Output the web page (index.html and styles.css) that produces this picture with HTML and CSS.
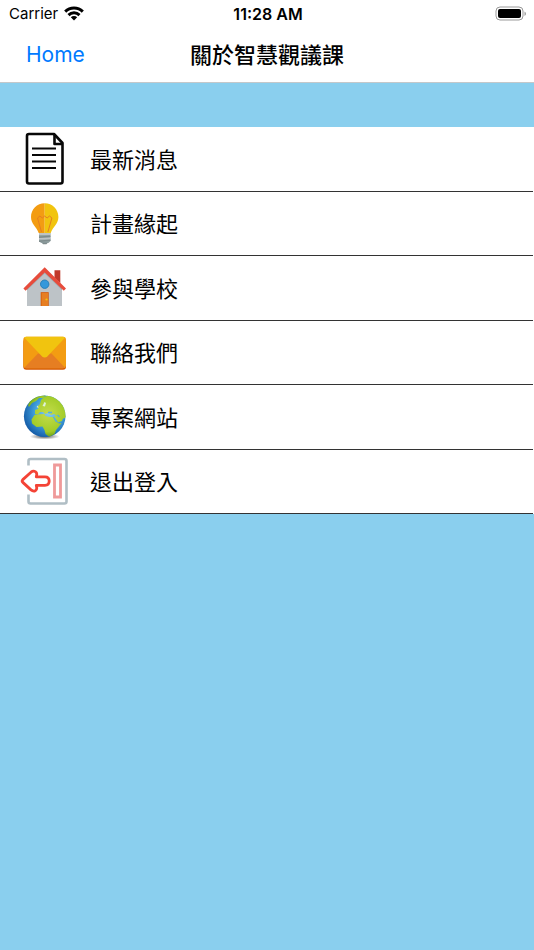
FILE: index.html
```html
<!DOCTYPE html>
<html lang="zh-Hant">
<head>
    <meta charset="UTF-8">
    <meta name="viewport" content="width=device-width, initial-scale=1.0">
    <title>關於智慧觀議課</title>
    <link rel="stylesheet" href="styles.css">
</head>
<body>
    <header class="header">
        <div class="status-bar">
            <div class="carrier">
                <span>Carrier</span>
                <svg width="20" height="15" viewBox="0 0 20 15" fill="none" stroke="#000" stroke-width="3">
                    <path d="M1.2 5.6a12.6 12.6 0 0 1 17.6 0"/>
                    <path d="M4.5 9.1a7.9 7.9 0 0 1 11 0"/>
                    <path d="M10 14.5L6.8 11.3a4.6 4.6 0 0 1 6.4 0z" fill="#000" stroke="none"/>
                </svg>
            </div>
            <div class="time">11:28 AM</div>
            <div class="battery">
                <svg width="32" height="16" viewBox="0 0 32 16">
                    <rect x="1" y="1" width="27" height="13" rx="4" fill="none" stroke="#999"/>
                    <rect x="3" y="3" width="23" height="9" rx="2"/>
                    <path d="M29.5 5.5v4.5q1.5-.6 1.5-2.2t-1.5-2.3z" fill="#999"/>
                </svg>
            </div>
        </div>
        <nav class="nav-bar">
            <a class="home" href="#">Home</a>
            <h1>關於智慧觀議課</h1>
        </nav>
    </header>

    <main class="content">
        <ul class="menu">
            <li>
                <a href="#">
                    <svg class="icon" viewBox="0 0 50 60" fill="none" stroke="#080808" stroke-width="2.6" stroke-linejoin="round">
                        <path d="M9 5h25l8.500 9v38.500q0 2-2 2H9q-2 0-2-2V7q0-2 2-2z"/>
                        <path d="M34.500 5.500V15H42"/>
                        <path d="M12 19.500h24M12 26h24M12 32.500h24M12 39h24" stroke-width="2"/>
                    </svg>
                    <span>最新消息</span>
                </a>
            </li>
            <li>
                <a href="#">
                    <svg class="icon" viewBox="0 0 50 60">
                        <path d="M24.7 10.3C17 10.3 11 16.5 11 24c0 7 5.500 9.500 7.700 16h6z" fill="#f39c12"/>
                        <path d="M24.7 10.3c7.700 0 13.700 6.200 13.700 13.700 0 7-5.500 9.500-7.700 16h-6z" fill="#f1c40f"/>
                        <path d="M21.500 39L17.500 25l2.400-2 2.400 2 2.400-2 2.400 2 2.400-2 2.400 2-4 14" fill="none" stroke="#e67e22" stroke-width="1"/>
                        <path d="M19 40h11.500v8l-2 2h-7.500l-2-2z" fill="#95a5a6"/>
                        <path d="M19 40h11.500v2H19zM19 44.500h11.500v2H19z" fill="#bdc3c7"/>
                        <path d="M19 43.500l11.500-1v1.500L19 45zM19 47.500l11.500-1V48L19 49z" fill="#7f8c8d"/>
                        <path d="M21.500 49.500h6.500l-1.500 1.800h-3.500z" fill="#7f8c8d"/>
                    </svg>
                    <span>計畫緣起</span>
                </a>
            </li>
            <li>
                <a href="#">
                    <svg class="icon" viewBox="0 0 50 60">
                        <path d="M34.5 12.200h5.800V25l-5.800-5z" fill="#c0392b"/>
                        <path d="M7 29.500L24.700 12 42 29.500V48H7z" fill="#bdc3c7"/>
                        <path d="M7 29.500L24.700 12 42 29.500v2.700L24.700 15.500 7 32.200z" fill="#a3adb2"/>
                        <path d="M24.700 9.200L46 30.400l-2.200 2.400L24.700 14.600 5.600 32.800l-2.200-2.400z" fill="#e74c3c"/>
                        <circle cx="24.7" cy="26.2" r="4.2" fill="#3498db" stroke="#2980b9" stroke-width="1"/>
                        <path d="M20.700 34.200h8V48h-8z" fill="#d35400"/>
                        <path d="M21.500 35h6.500V48h-6.500z" fill="#e67e22"/>
                        <circle cx="26.5" cy="41.5" r="1.1" fill="#f1c40f"/>
                    </svg>
                    <span>參與學校</span>
                </a>
            </li>
            <li>
                <a href="#">
                    <svg class="icon" viewBox="0 0 50 60">
                        <rect x="3.3" y="17" width="42.7" height="30.7" rx="3" fill="#d35400"/>
                        <rect x="3.3" y="14.7" width="42.7" height="31.5" rx="3" fill="#f39c12"/>
                        <path d="M4.500 45.500L18 31.500h13.500l13.300 14q-.8.700-2 .7H6.500q-1.200 0-2-.7z" fill="#e67e22"/>
                        <path d="M4.300 15.700q.8-1 2-1h36.700q1.200 0 2 1L27.500 34.300q-2.800 2.500-5.600 0z" fill="#f1c40f"/>
                    </svg>
                    <span>聯絡我們</span>
                </a>
            </li>
            <li>
                <a href="#">
                    <svg class="icon" viewBox="0 0 50 60">
                        <defs>
                            <radialGradient id="sea" cx="0.6" cy="0.4" r="0.7">
                                <stop offset="0" stop-color="#8fd0f2"/>
                                <stop offset="0.5" stop-color="#3f9edb"/>
                                <stop offset="1" stop-color="#0b4d9c"/>
                            </radialGradient>
                            <radialGradient id="land" gradientUnits="userSpaceOnUse" cx="28" cy="27" r="25">
                                <stop offset="0" stop-color="#c3dc4c"/>
                                <stop offset="0.7" stop-color="#a3cc28"/>
                                <stop offset="1" stop-color="#568f13"/>
                            </radialGradient>
                            <radialGradient id="shadow">
                                <stop offset="0" stop-color="#555"/>
                                <stop offset="1" stop-color="#555" stop-opacity="0"/>
                            </radialGradient>
                            <clipPath id="globe"><circle cx="24.7" cy="29.2" r="20.8"/></clipPath>
                        </defs>
                        <ellipse cx="24.7" cy="49.5" rx="15" ry="3" fill="url(#shadow)"/>
                        <circle cx="24.7" cy="29.2" r="20.8" fill="url(#sea)"/>
                        <g clip-path="url(#globe)" fill="url(#land)">
                            <path d="M8 18l3-6 7-4h8l-3 3-4 0-3 3-4 2-3 4z"/>
                            <path d="M15 27l0-4 3-1 0-3 2-2 1-4 3-3 3-1 3-3 10 4 6 9 1 11-5 2-5-3-3-2-3 1-3-2-3 1-2-2-3 0-2 2.500z"/>
                            <path d="M14.500 28l5-.8 5-.2 1 2 4 1 5 0 2 5 2.500 1.500 2.500-.5-3 4-2.500 3-1.500 4-5 3-4-3-1-4-2-3.500-6 .5-4.500-3.500-.5-4z"/>
                            <path d="M34 29l4 6.500 4-1.500 1-3-4-3z"/>
                        </g>
                        <path d="M16.500 20l1.500-1.500.5 2.500zM22.500 19l2-4 1.500 1-1 3.500z" fill="#def0d8"/>
                        <path d="M28 25.500h4M33.500 30l3 5M37.500 28l2 2" fill="none" stroke="#55ade0" stroke-width="1.3"/>
                    </svg>
                    <span>專案網站</span>
                </a>
            </li>
            <li>
                <a href="#">
                    <svg class="icon" viewBox="0 0 50 60" fill="none" stroke-linejoin="round">
                        <path d="M8.500 14.500V10q0-2 2-2h34q2 0 2 2v40.500q0 2-2 2h-34q-2 0-2-2v-7" stroke="#b0bec5" stroke-width="2.6"/>
                        <path d="M34.500 14h6v32h-6z" stroke="#ef9a9a" stroke-width="2.8" stroke-linejoin="miter"/>
                        <path d="M2.800 28.600l8.200-7.400q2.200-1.800 4.300-.6 1.800 1.200 1.400 3.200l-.4 2h8.700q4.200 0 4.200 4.300t-4.200 4.300h-8.700l.4 2q.4 2.200-1.400 3.300-2.100 1-4.300-.8l-8.200-7.500q-1.300-1.400 0-2.800z" stroke="#f44336" stroke-width="2.8"/>
                    </svg>
                    <span>退出登入</span>
                </a>
            </li>
        </ul>
    </main>
</body>
</html>
```

FILE: styles.css
```css
* {
    box-sizing: border-box;
}
body {
    margin: 0;
    min-height: 100vh;
    background: #8acfee;
    color: #000;
    font-family: Inter, "Noto Sans CJK TC", sans-serif;
}
.header {
    background: #fff;
    border-bottom: 1px solid #c4c8ca;
}
.status-bar {
    display: grid;
    grid-template-columns: 1fr auto 1fr;
    align-items: center;
    height: 27px;
    padding: 0 7px 0 9px;
    font-size: 15px;
}
.carrier {
    display: flex;
    align-items: center;
    gap: 6px;
}
.carrier svg {
    display: block;
}
.time {
    font-size: 16px;
    font-weight: 600;
}
.battery {
    display: flex;
    justify-content: flex-end;
}
.nav-bar {
    display: grid;
    grid-template-columns: 1fr auto 1fr;
    align-items: center;
    height: 55px;
    padding: 0 26px;
}
.home {
    color: #007aff;
    font-size: 21px;
    text-decoration: none;
}
h1 {
    margin: 0;
    padding-bottom: 4px;
    font-family: "Noto Sans CJK TC", sans-serif;
    font-size: 22px;
    font-weight: 500;
    line-height: 32px;
}
.content {
    padding-top: 44px;
}
.menu {
    display: grid;
    grid-template-rows: repeat(6, 1fr);
    height: 387px;
    margin: 0;
    padding: 0 1px 0 0;
    list-style: none;
    background: #fff;
}
.menu li {
    display: grid;
    border-bottom: 1px solid #333;
}
.menu a {
    display: flex;
    align-items: center;
    gap: 20px;
    padding-left: 20px;
    color: #000;
    font-family: "Noto Sans CJK TC", sans-serif;
    font-size: 22px;
    line-height: 32px;
    text-decoration: none;
}
.menu span {
    padding-bottom: 2px;
}
.icon {
    width: 50px;
    height: 60px;
}
```
